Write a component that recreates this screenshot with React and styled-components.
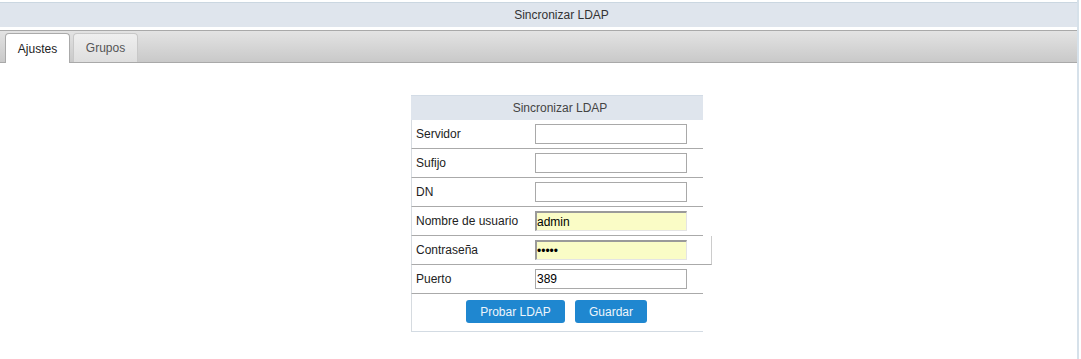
import React from 'react';
import styled, { createGlobalStyle } from 'styled-components';

const GlobalStyle = createGlobalStyle`
  body {
    margin: 0;
    background: #fff;
    font-family: "Liberation Sans", Arial, sans-serif;
    font-size: 12px;
    color: #222;
  }
`;

const Page = styled.div`
  width: 1079px;
  height: 359px;
  border-right: 2px solid #d6e1ea;
  padding-top: 2px;
  box-sizing: border-box;
`;

const TitleBar = styled.div`
  height: 25px;
  box-sizing: border-box;
  border-top: 1px solid #cbd7e1;
  background: #dfe5ed;
  color: #333;
  display: flex;
  align-items: center;
  justify-content: center;
  padding-left: 46px;
`;

const TabBar = styled.div`
  margin-top: 3px;
  height: 33px;
  box-sizing: border-box;
  border-top: 1px solid #a9a9a9;
  border-bottom: 1px solid #a9a9a9;
  background: linear-gradient(#e3e3e3, #c9c9c9);
  display: flex;
  align-items: flex-end;
  gap: 3px;
  padding-left: 5px;
`;

const Tab = styled.div`
  box-sizing: border-box;
  display: flex;
  align-items: center;
  justify-content: center;
  border: 1px solid ${(p) => (p.active ? '#aaa' : '#c8c8c8')};
  border-bottom: none;
  border-radius: 4px 4px 0 0;
  background: ${(p) => (p.active ? '#fff' : 'linear-gradient(#efefef, #dedede)')};
  color: ${(p) => (p.active ? '#222' : '#555')};
  margin-bottom: ${(p) => (p.active ? '-1px' : '0')};
  height: ${(p) => (p.active ? '30px' : '29px')};
  width: ${(p) => p.w}px;
`;

const Form = styled.div`
  margin: 32px 0 0 411px;
  width: 292px;
`;

const FormHeader = styled.div`
  height: 25px;
  box-sizing: border-box;
  border-top: 1px solid #d3dce6;
  background: #dfe5ed;
  color: #444;
  display: flex;
  align-items: center;
  justify-content: center;
  padding-left: 6px;
`;

const Row = styled.div`
  display: flex;
  align-items: center;
  height: 29px;
  box-sizing: border-box;
  border-left: 1px solid #d6dbe0;
  border-bottom: 1px solid #aaa;
  width: ${(p) => (p.wide ? '301px' : '292px')};
  border-right: ${(p) => (p.wide ? '1px solid #ccc' : 'none')};
`;

const Label = styled.label`
  width: 119px;
  padding-left: 4px;
  color: #222;
`;

const Input = styled.input`
  width: 152px;
  height: 20px;
  box-sizing: border-box;
  margin: 0;
  padding: 0 1px;
  font-family: "Liberation Sans", Arial, sans-serif;
  font-size: 12px;
  color: #000;
  outline: none;
  border: 1px solid #a9a9a9;
  background: #fff;
  ${(p) =>
    p.filled &&
    `
    background: #fafcc6;
    border-top: 2px solid #9a9a9a;
    border-left: 2px solid #9a9a9a;
    border-right: 1px solid #e4e4e4;
    border-bottom: 1px solid #e4e4e4;
    padding: 0;
  `}
`;

const ButtonRow = styled.div`
  height: 38px;
  box-sizing: border-box;
  border-left: 1px solid #d6dbe0;
  border-bottom: 1px solid #d3dbe3;
  display: flex;
  align-items: center;
  justify-content: center;
  gap: 10px;
  padding-bottom: 2px;
  padding-right: 2px;
`;

const Button = styled.button`
  height: 23px;
  padding: 0 14px;
  border: none;
  border-radius: 3px;
  background: #1f87d0;
  color: #eef5fb;
  font-family: "Liberation Sans", Arial, sans-serif;
  font-size: 12px;
  width: ${(p) => p.w}px;
`;

const fields = [
  { label: 'Servidor', value: '' },
  { label: 'Sufijo', value: '' },
  { label: 'DN', value: '' },
  { label: 'Nombre de usuario', value: 'admin', filled: true },
  { label: 'Contraseña', value: '12345', filled: true, type: 'password', wide: true },
  { label: 'Puerto', value: '389' },
];

const App = () => (
  <Page>
    <GlobalStyle />
    <TitleBar>Sincronizar LDAP</TitleBar>
    <TabBar>
      <Tab active w={65}>Ajustes</Tab>
      <Tab w={65}>Grupos</Tab>
    </TabBar>
    <Form>
      <FormHeader>Sincronizar LDAP</FormHeader>
      {fields.map((f) => (
        <Row key={f.label} wide={f.wide}>
          <Label>{f.label}</Label>
          <Input
            type={f.type || 'text'}
            defaultValue={f.value}
            filled={f.filled}
          />
        </Row>
      ))}
      <ButtonRow>
        <Button w={99}>Probar LDAP</Button>
        <Button w={72}>Guardar</Button>
      </ButtonRow>
    </Form>
  </Page>
);

export default App;
